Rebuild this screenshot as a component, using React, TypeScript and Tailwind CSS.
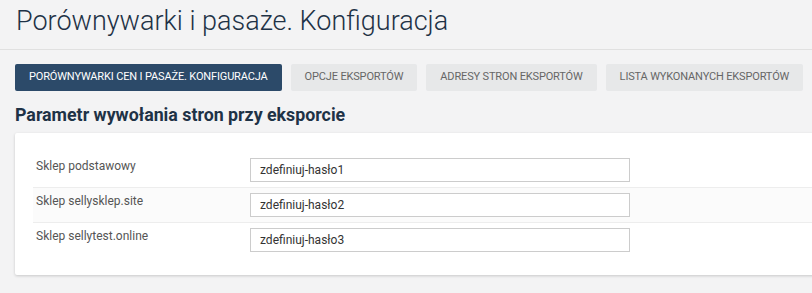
import React from "react";

const tabs = [
  { label: "PORÓWNYWARKI CEN I PASAŻE. KONFIGURACJA", active: true },
  { label: "OPCJE EKSPORTÓW", active: false },
  { label: "ADRESY STRON EKSPORTÓW", active: false },
  { label: "LISTA WYKONANYCH EKSPORTÓW", active: false },
];

const rows = [
  { label: "Sklep podstawowy", value: "zdefiniuj-hasło1" },
  { label: "Sklep sellysklep.site", value: "zdefiniuj-hasło2" },
  { label: "Sklep sellytest.online", value: "zdefiniuj-hasło3" },
];

export default function App() {
  return (
    <div
      className="w-[812px] h-[293px] overflow-hidden bg-[#f3f3f4]"
      style={{ fontFamily: "Roboto, 'Noto Sans', sans-serif" }}
    >
      <div className="h-[50px] border-b border-[#e0e0e0] pl-[16px] pt-[3px]">
        <h1 className="text-[27px] leading-[36px] font-light text-[#1e3246] whitespace-nowrap">
          Porównywarki i pasaże. Konfiguracja
        </h1>
      </div>
      <div className="pl-[15px]">
        <div className="flex gap-[9px] mt-[14px]">
          {tabs.map((t) => (
            <div
              key={t.label}
              className={
                t.active
                  ? "shrink-0 whitespace-nowrap h-[27px] flex items-center px-[14px] text-[11px] tracking-[-0.15px] bg-[#2c4a69] text-white rounded-[2px]"
                  : "shrink-0 whitespace-nowrap h-[27px] flex items-center px-[14px] text-[11px] tracking-[-0.15px] bg-[#e7e8e9] text-[#666] rounded-[2px]"
              }
            >
              {t.label}
            </div>
          ))}
        </div>
        <h2 className="mt-[12px] text-[17.8px] leading-[24px] font-bold text-[#1e3246] whitespace-nowrap">
          Parametr wywołania stron przy eksporcie
        </h2>
        <div className="mt-[6px] mr-[-20px] bg-white rounded-[2px] shadow-[0_1px_3px_rgba(0,0,0,0.18)] pt-[18px] pb-[18px] pl-[18px]">
          {rows.map((r, i) => (
            <div
              key={r.label}
              className={
                i === 0
                  ? "flex items-start pt-[7px] pb-[5px]"
                  : i === 1
                  ? "flex items-start pt-[5px] pb-[5px] border-t border-[#ededed] bg-[#fbfbfb]"
                  : "flex items-start pt-[5px] pb-[5px] border-t border-[#ededed]"
              }
            >
              <div className="w-[217px] pl-[3px] -mt-px text-[12px] leading-[18px] text-[#555]">
                {r.label}
              </div>
              <div className="w-[380px] h-[24px] border border-[#ccc] bg-white flex items-center pl-[9px] text-[12px] text-[#333]">
                {r.value}
              </div>
            </div>
          ))}
        </div>
      </div>
    </div>
  );
}
